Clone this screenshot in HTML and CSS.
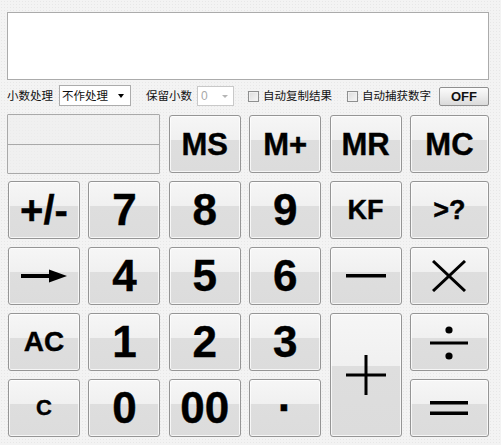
FILE: index.html
```html
<!DOCTYPE html>
<html lang="zh-CN">
<head>
<meta charset="utf-8">
<title>计算器</title>
<link rel="stylesheet" href="styles.css">
</head>
<body>
<div class="app">
  <div class="display"></div>
  <div class="options">
    <span class="lbl lbl-first">小数处理</span>
    <div class="combo combo-wide"><span class="combo-text">不作处理</span><span class="caret"></span></div>
    <span class="lbl lbl-second">保留小数</span>
    <div class="combo combo-disabled"><span class="combo-text">0</span><span class="caret"></span></div>
    <label class="check check-first"><span class="box"></span><span class="check-text">自动复制结果</span></label>
    <label class="check check-second"><span class="box"></span><span class="check-text">自动捕获数字</span></label>
    <button class="off">OFF</button>
  </div>
  <div class="pad">
    <div class="memory"><div class="mem-line"></div><div class="mem-line"></div></div>
    <button class="key k-mem">MS</button>
    <button class="key k-mem">M+</button>
    <button class="key k-mem">MR</button>
    <button class="key k-mem">MC</button>

    <button class="key k-sign">+/-</button>
    <button class="key k-num">7</button>
    <button class="key k-num">8</button>
    <button class="key k-num">9</button>
    <button class="key k-kf">KF</button>
    <button class="key k-q">&gt;?</button>

    <button class="key" aria-label="→"><svg class="ico" width="46" height="14" viewBox="0 0 46 14"><rect x="0" y="5" width="32" height="4" fill="#000"/><polygon points="28,0.5 46,7 28,13.5" fill="#000"/></svg></button>
    <button class="key k-num">4</button>
    <button class="key k-num">5</button>
    <button class="key k-num">6</button>
    <button class="key" aria-label="—"><svg class="ico" width="40" height="4" viewBox="0 0 40 4"><rect x="0" y="0" width="40" height="3.5" fill="#000"/></svg></button>
    <button class="key" aria-label="×"><svg class="ico" width="34" height="32" viewBox="0 0 34 32"><line x1="1" y1="1" x2="33" y2="31" stroke="#000" stroke-width="3"/><line x1="33" y1="1" x2="1" y2="31" stroke="#000" stroke-width="3"/></svg></button>

    <button class="key k-ac">AC</button>
    <button class="key k-num">1</button>
    <button class="key k-num">2</button>
    <button class="key k-num">3</button>
    <button class="key k-plus" aria-label="+"><svg class="ico" width="40" height="40" viewBox="0 0 40 40"><rect x="0" y="18.5" width="40" height="3" fill="#000"/><rect x="18.5" y="0" width="3" height="40" fill="#000"/></svg></button>
    <button class="key" aria-label="÷"><svg class="ico ico-div" width="38" height="34" viewBox="0 0 38 34"><rect x="0" y="15.5" width="38" height="3" fill="#000"/><circle cx="19" cy="4" r="3.6" fill="#000"/><circle cx="19" cy="30" r="3.6" fill="#000"/></svg></button>

    <button class="key k-c">C</button>
    <button class="key k-num">0</button>
    <button class="key k-num">00</button>
    <button class="key k-dot">·</button>
    <button class="key" aria-label="="><svg class="ico" width="38" height="14" viewBox="0 0 38 14"><rect x="0" y="0" width="38" height="3.5" fill="#000"/><rect x="0" y="10.5" width="38" height="3.5" fill="#000"/></svg></button>
  </div>
</div>
</body>
</html>
```
FILE: styles.css
```css
* { box-sizing: border-box; }
html, body {
  margin: 0;
  padding: 0;
}
body {
  width: 501px;
  height: 445px;
  overflow: hidden;
  background-color: #f3f3f3;
  background-image: radial-gradient(circle, #e7e7e7 0.6px, transparent 0.9px);
  background-size: 3px 3px;
  font-family: "Noto Sans CJK SC", "Liberation Sans", sans-serif;
  color: #111;
}
.app {
  padding: 12px 12px 0 7px;
}
.display {
  height: 68px;
  background: #fff;
  border: 1px solid #ababab;
}
.options {
  display: flex;
  align-items: center;
  height: 21px;
  margin-top: 5px;
  font-size: 11.5px;
  line-height: 1;
}
.lbl { white-space: nowrap; }
.lbl-first { width: 52px; }
.lbl-second { margin-left: 15px; width: 51px; }
.combo {
  position: relative;
  height: 21px;
  background: #fff;
  border: 1px solid #acacac;
  display: flex;
  align-items: center;
  padding-left: 2px;
}
.combo-wide { width: 72px; }
.combo-disabled {
  width: 37px;
  height: 20px;
  border-color: #c9c9c9;
  color: #a8a8a8;
  padding-left: 3px;
  font-family: "Liberation Sans", sans-serif;
  font-size: 12px;
}
.caret {
  position: absolute;
  right: 6px;
  top: 8px;
  width: 0;
  height: 0;
  border-left: 3.5px solid transparent;
  border-right: 3.5px solid transparent;
  border-top: 4px solid #000;
}
.combo-disabled .caret {
  right: 5px;
  border-top-color: #b5b5b5;
  border-left-width: 3px;
  border-right-width: 3px;
  border-top-width: 3px;
}
.check {
  display: flex;
  align-items: center;
  white-space: nowrap;
}
.check-first { margin-left: 14px; }
.check-second { margin-left: 15px; }
.box {
  width: 11px;
  height: 11px;
  border: 1px solid #8e8f8f;
  background: linear-gradient(135deg, #dcdcdc, #f6f6f6);
  box-shadow: inset 0 0 0 1px #f0f0f0;
  margin-right: 4px;
  margin-top: 1px;
}
.off {
  margin-left: auto;
  width: 50px;
  height: 19px;
  padding: 0;
  border: 1px solid #8f8f8f;
  border-radius: 2px;
  background: linear-gradient(#fbfbfb 0%, #ececec 50%, #dadada 100%);
  font-family: "Liberation Sans", sans-serif;
  font-weight: bold;
  font-size: 13px;
  line-height: 1;
  color: #111;
  margin-top: 1px;
}
.pad {
  margin-top: 9px;
  margin-left: 1px;
  display: grid;
  grid-template-columns: 72px 72px 72px 72px 72px 79px;
  grid-template-rows: repeat(5, 58px);
  column-gap: 8.4px;
  row-gap: 8px;
}
.memory {
  grid-column: 1 / 3;
  margin: -1px 0 -1px -1px;
  display: flex;
  flex-direction: column;
  border: 1px solid #a9a9a9;
  border-radius: 1px;
}
.mem-line {
  flex: 1;
  background: rgba(238, 238, 238, 0.6);
}
.mem-line + .mem-line {
  border-top: 1px solid #a9a9a9;
}
.key {
  display: flex;
  align-items: center;
  justify-content: center;
  padding: 0;
  border: 1px solid #959595;
  border-radius: 3px;
  background: linear-gradient(#f6f6f6 0%, #f0f0f0 43%, #dedede 43%, #dcdcdc 100%);
  box-shadow: inset 0 0 0 1px rgba(255, 255, 255, 0.75);
  font-family: "Liberation Sans", Arial, sans-serif;
  font-weight: bold;
  color: #000;
  line-height: 1;
  -webkit-text-stroke: 0.4px #000;
}
.k-num { font-size: 44px; }
.k-mem { font-size: 31px; }
.k-sign { font-size: 40px; }
.k-kf { font-size: 27px; }
.k-q { font-size: 27px; }
.k-ac { font-size: 28px; }
.k-c { font-size: 22px; }
.k-dot { font-size: 44px; }
.k-plus {
  grid-row: 4 / 6;
  grid-column: 5;
}
.ico { display: block; }
.ico-div { margin-top: 1px; }
```
